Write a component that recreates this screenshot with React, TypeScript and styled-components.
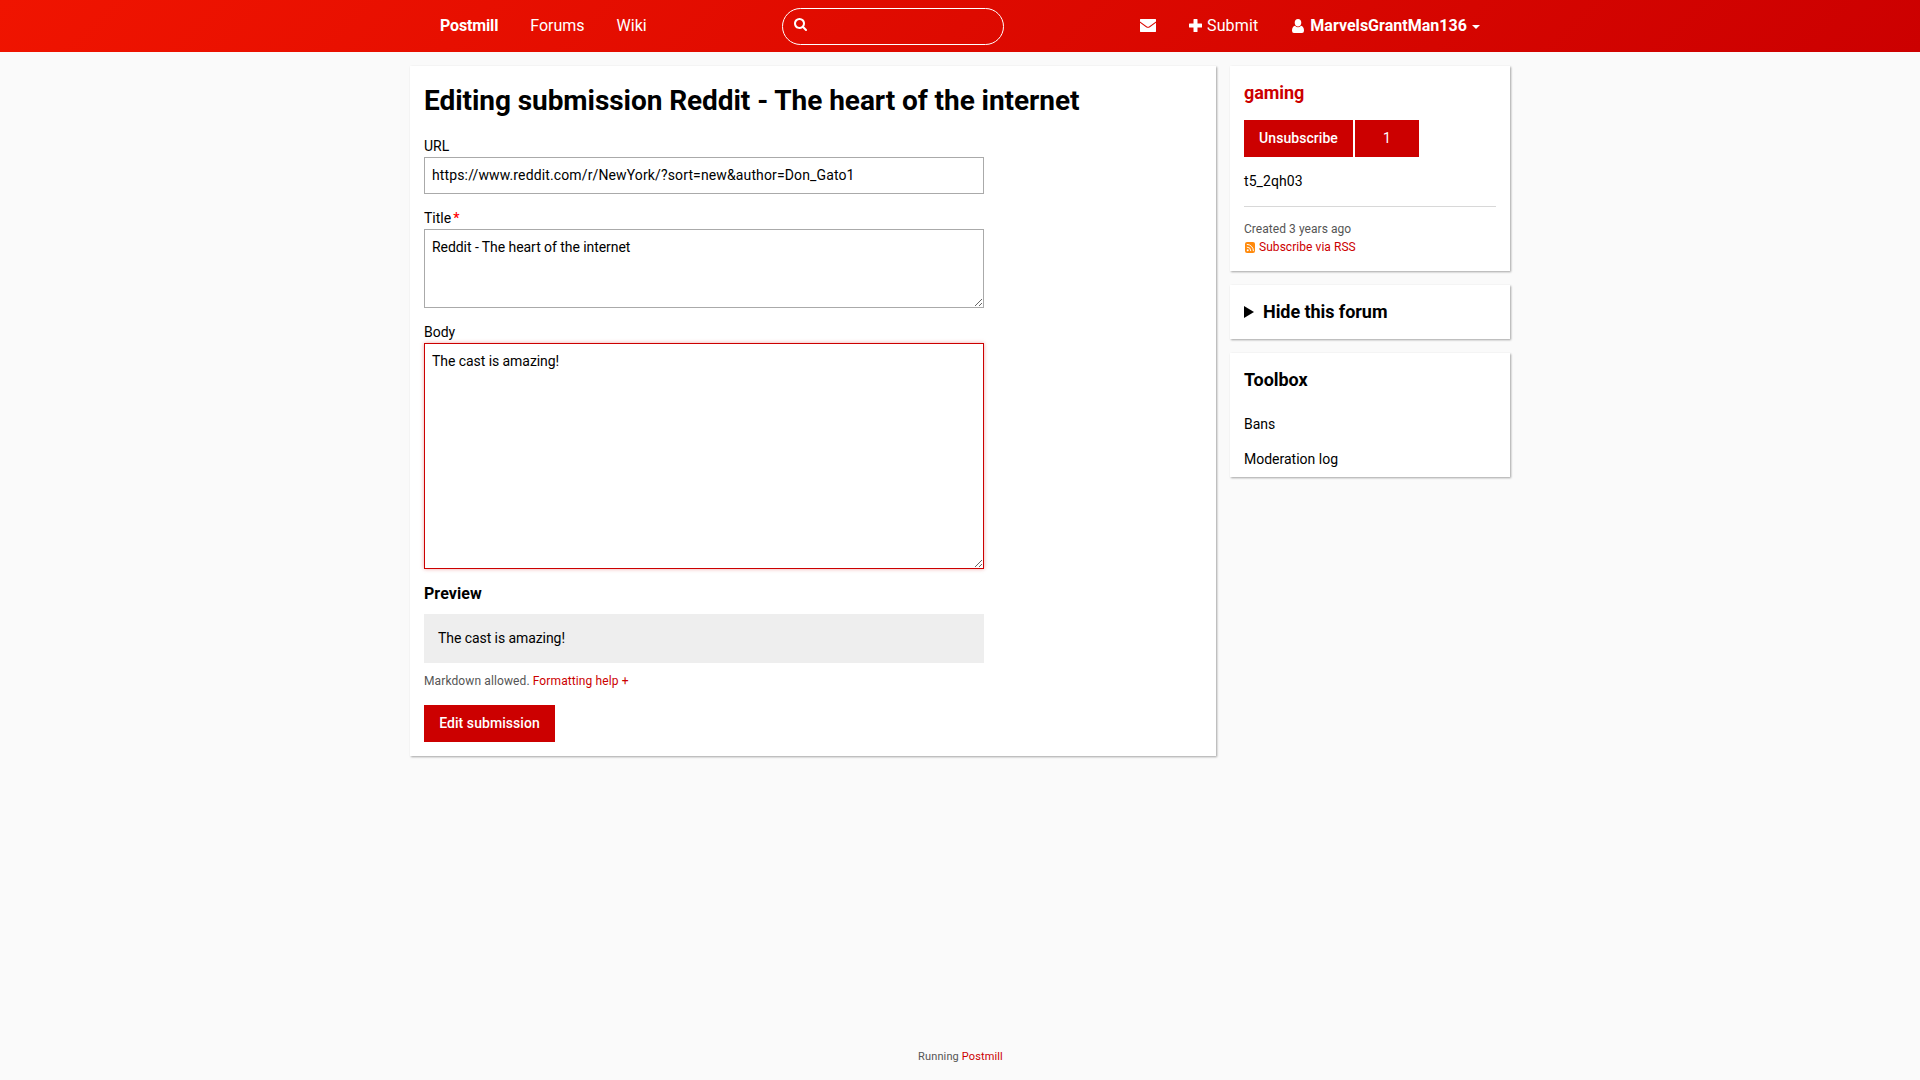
import React from "react";
import styled, { createGlobalStyle } from "styled-components";

const GlobalStyle = createGlobalStyle`
  *, *::before, *::after { box-sizing: border-box; }
  html, body { margin: 0; padding: 0; }
  body {
    background: #fafafa;
    color: #000;
    font: 14px/1.5 Roboto, "Liberation Sans", sans-serif;
  }
  a { color: #c00; text-decoration: none; }
`;

const Page = styled.div`
  display: flex;
  flex-direction: column;
  min-height: 100vh;
`;

const Header = styled.header`
  height: 52px;
  display: flex;
  justify-content: center;
  background: linear-gradient(135deg, #f01400, #c00);
`;

const Nav = styled.nav`
  width: 1100px;
  padding: 0 14px;
  display: flex;
  align-items: center;
  justify-content: space-between;
`;

const NavGroup = styled.div`
  display: flex;
`;

const NavLink = styled.a<{ $bold?: boolean; $spacing?: number }>`
  display: flex;
  align-items: center;
  height: 52px;
  padding: 0 16px;
  font-size: 16px;
  line-height: 24px;
  font-weight: ${(p) => (p.$bold ? 700 : 400)};
  letter-spacing: ${(p) => p.$spacing ?? 0}px;
  color: #fff;
`;

const SearchBox = styled.label`
  display: flex;
  align-items: flex-start;
  width: 222px;
  height: 37px;
  padding: 9px 11px;
  border: 1px solid #fff;
  border-radius: 19px;
`;

const SearchInput = styled.input`
  flex: 1;
  min-width: 0;
  border: 0;
  outline: 0;
  background: transparent;
  color: #fff;
`;

const Glyph = styled.svg<{ $w: number; $h: number; $margin?: string }>`
  display: block;
  flex: none;
  width: ${(p) => p.$w}px;
  height: ${(p) => p.$h}px;
  margin: ${(p) => p.$margin ?? "0"};
  fill: #fff;
`;

const Caret = styled.span`
  margin: 2px 0 0 5px;
  border: 4px solid transparent;
  border-top-color: #fff;
  border-bottom: 0;
`;

const Columns = styled.div`
  width: 1100px;
  margin: 14px auto 0;
  display: flex;
  align-items: flex-start;
  gap: 14px;
`;

const Card = styled.section<{ $bottom?: number }>`
  padding: 14px 14px ${(p) => p.$bottom ?? 14}px;
  background: #fff;
  box-shadow: 1px 1px 2px rgba(0, 0, 0, 0.35);
`;

const Main = styled(Card)`
  flex: 1;
  height: 690px;
`;

const Sidebar = styled.aside`
  width: 280px;
  display: flex;
  flex-direction: column;
  gap: 14px;
`;

const PageTitle = styled.h1`
  margin: 0 0 14px;
  font-size: 28px;
  line-height: 42px;
  letter-spacing: -0.06px;
`;

const Form = styled.form`
  width: 560px;
`;

const Field = styled.div`
  margin-bottom: 14px;
`;

const Label = styled.label`
  display: block;
  height: 21px;
`;

const Required = styled.span`
  color: #f00;
  font-weight: 500;
  margin-left: 2px;
`;

const TextInput = styled.input`
  display: block;
  width: 100%;
  height: 37px;
  padding: 6px 7px 8px;
  border: 1px solid #aaa;
  background: #fff;
  color: #000;
  font: inherit;
  letter-spacing: 0.13px;
  outline: 0;
`;

const TextArea = styled.textarea<{ $height: number; $active?: boolean }>`
  display: block;
  width: 100%;
  height: ${(p) => p.$height}px;
  padding: 7px;
  border: 1px solid ${(p) => (p.$active ? "#c00" : "#aaa")};
  box-shadow: ${(p) => (p.$active ? "0 0 4px rgba(204, 0, 0, 0.35)" : "none")};
  background: #fff;
  color: #000;
  font: inherit;
  letter-spacing: -0.06px;
  outline: 0;
`;

const PreviewTitle = styled.h3`
  margin: 0 0 9px;
  font-size: 16px;
  line-height: 22px;
  letter-spacing: 0.06px;
`;

const Preview = styled.div`
  height: 49px;
  padding: 14px;
  background: #eee;
  letter-spacing: -0.07px;
`;

const Hint = styled.p`
  margin: 9px 0 15px;
  font-size: 12px;
  line-height: 18px;
  letter-spacing: 0.11px;
  color: #555;
`;

const Button = styled.button<{ $width: number; $light?: boolean }>`
  width: ${(p) => p.$width}px;
  height: 37px;
  padding: 0;
  border: 0;
  background: #c00;
  color: #fff;
  font: inherit;
  font-weight: ${(p) => (p.$light ? 400 : 500)};
  letter-spacing: 0.06px;
`;

const ButtonRow = styled.div`
  display: flex;
  gap: 2px;
  margin: 14px 0;
`;

const SideTitle = styled.h2`
  margin: 0;
  font-size: 18px;
  line-height: 26px;
  letter-spacing: -0.06px;
`;

const Divider = styled.hr`
  margin: 14px 0 13px;
  border: 0;
  border-top: 1px solid #d8d8d8;
`;

const Text = styled.p`
  margin: 0;
  letter-spacing: 0.08px;
`;

const Meta = styled.div`
  font-size: 12px;
  line-height: 18px;
  letter-spacing: 0.05px;
  color: #555;
`;

const RssLink = styled.a`
  display: flex;
  align-items: center;
`;

const RssIcon = styled.svg`
  width: 10px;
  height: 11px;
  margin: 0 4px 0 1px;
`;

const Disclosure = styled.div`
  display: flex;
  align-items: center;
`;

const Triangle = styled.span`
  margin: 0 9px 0 0;
  border: 6px solid transparent;
  border-left: 10px solid #000;
  border-right: 0;
`;

const ToolList = styled.ul`
  margin: 14px 0 0;
  padding: 0;
  list-style: none;
`;

const ToolItem = styled.li`
  height: 35px;
  padding: 7px 0;
`;

const Footer = styled.footer`
  margin-top: auto;
  padding: 14px 0 15px 1px;
  text-align: center;
  font-size: 11px;
  line-height: 17px;
  letter-spacing: 0.13px;
  color: #555;
`;

export default function App() {
  return (
    <Page>
      <GlobalStyle />
      <Header>
        <Nav>
          <NavGroup>
            <NavLink $bold $spacing={-0.15}>Postmill</NavLink>
            <NavLink>Forums</NavLink>
            <NavLink>Wiki</NavLink>
          </NavGroup>
          <SearchBox>
            <Glyph $w={13} $h={13} viewBox="64 128 1664 1664">
              <path d="M1216 832q0-185-131.500-316.500t-316.500-131.500-316.500 131.500-131.500 316.500 131.500 316.500 316.500 131.500 316.500-131.500 131.500-316.500zm512 832q0 52-38 90t-90 38q-54 0-90-38l-343-342q-179 124-399 124-143 0-273.500-55.500t-225-150-150-225-55.500-273.500 55.500-273.500 150-225 225-150 273.500-55.500 273.500 55.500 225 150 150 225 55.500 273.500q0 220-124 399l343 343q37 37 37 90z" />
            </Glyph>
            <SearchInput aria-label="Search" />
          </SearchBox>
          <NavGroup>
            <NavLink>
              <Glyph $w={16} $h={13} $margin="-1px -1px 0 1px" viewBox="0 0 16 13">
                <path d="M0.400 0H15.600L16 0.400V2.400L9.400 7.300Q8 8.300 6.600 7.300L0 2.400V0.400ZM0 3.700L6.100 8.200Q8 9.400 9.900 8.200L16 3.700V12.600L15.600 13H0.400L0 12.600Z" />
              </Glyph>
            </NavLink>
            <NavLink $spacing={0.12}>
              <Glyph $w={13} $h={13} $margin="-2px 5px 0 2.5px" viewBox="0 0 13 13">
                <path d="M5 0H8Q8.500 0 8.500 0.500V4.500H12.500Q13 4.500 13 5V8Q13 8.500 12.500 8.500H8.500V12.500Q8.500 13 8 13H5Q4.500 13 4.500 12.500V8.500H0.500Q0 8.500 0 8V5Q0 4.500 0.500 4.500H4.500V0.500Q4.500 0 5 0Z" />
              </Glyph>
              Submit
            </NavLink>
            <NavLink $bold $spacing={0.03}>
              <Glyph $w={12} $h={14} $margin="-1px 6px 0 2px" viewBox="0 0 12 14">
                <path d="M6 0C8.100 0 9.300 1.600 9.300 3.700C9.300 6 7.900 7.400 6 7.400C4.100 7.400 2.700 6 2.700 3.700C2.700 1.600 3.900 0 6 0ZM3 6.800Q4.300 8.300 6 8.300Q7.700 8.300 9 6.800Q12 7.600 12 11.800Q12 14 10 14H2Q0 14 0 11.800Q0 7.600 3 6.800Z" />
              </Glyph>
              MarvelsGrantMan136
              <Caret />
            </NavLink>
          </NavGroup>
        </Nav>
      </Header>

      <Columns>
        <Main>
          <PageTitle>Editing submission Reddit - The heart of the internet</PageTitle>
          <Form>
            <Field>
              <Label>URL</Label>
              <TextInput defaultValue="https://www.reddit.com/r/NewYork/?sort=new&author=Don_Gato1" />
            </Field>
            <Field>
              <Label>
                Title<Required>*</Required>
              </Label>
              <TextArea $height={79} defaultValue="Reddit - The heart of the internet" />
            </Field>
            <Field>
              <Label>Body</Label>
              <TextArea $height={226} $active defaultValue="The cast is amazing!" />
            </Field>
            <PreviewTitle>Preview</PreviewTitle>
            <Preview>The cast is amazing!</Preview>
            <Hint>
              Markdown allowed. <a>Formatting help +</a>
            </Hint>
            <Button type="button" $width={131}>Edit submission</Button>
          </Form>
        </Main>

        <Sidebar>
          <Card $bottom={15}>
            <SideTitle>
              <a>gaming</a>
            </SideTitle>
            <ButtonRow>
              <Button $width={109}>Unsubscribe</Button>
              <Button $width={64} $light>1</Button>
            </ButtonRow>
            <Text>t5_2qh03</Text>
            <Divider />
            <Meta>
              <div>Created 3 years ago</div>
              <RssLink>
                <RssIcon viewBox="0 0 10 11">
                  <rect width="10" height="11" rx="2" fill="#ff8a0c" />
                  <circle cx="2.700" cy="8.200" r="1" fill="#fff" />
                  <path d="M1.800 5.100a4 4 0 0 1 4 4M1.800 2.400A6.600 6.600 0 0 1 8.400 9.100" fill="none" stroke="#fff" strokeWidth="1" />
                </RssIcon>
                Subscribe via RSS
              </RssLink>
            </Meta>
          </Card>
          <Card>
            <Disclosure>
              <Triangle />
              <SideTitle>Hide this forum</SideTitle>
            </Disclosure>
          </Card>
          <Card $bottom={0}>
            <SideTitle>Toolbox</SideTitle>
            <ToolList>
              <ToolItem>Bans</ToolItem>
              <ToolItem>Moderation log</ToolItem>
            </ToolList>
          </Card>
        </Sidebar>
      </Columns>

      <Footer>
        Running <a>Postmill</a>
      </Footer>
    </Page>
  );
}
